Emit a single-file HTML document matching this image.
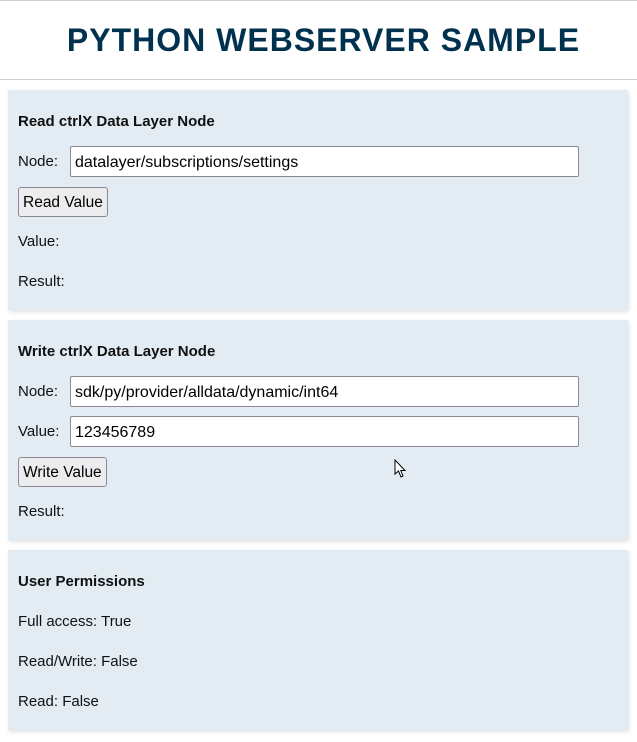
<!DOCTYPE html>
<html><head><style>
body{margin:0;width:637px;height:742px;background:#fff;position:relative;font-family:"Liberation Sans",sans-serif;overflow:hidden}
.t{position:absolute;left:0;top:0;width:637px;height:1px;background:#d0d0d0}
.h{position:absolute;left:0;top:79px;width:637px;height:1px;background:#d0d0d0}
h1{position:absolute;top:22px;left:0;width:647px;margin:0;text-align:center;font-size:32px;font-weight:bold;color:#00314f;letter-spacing:1px}
.c{position:absolute;left:8px;width:620px;background:#e3ecf2;box-shadow:1px 2px 4px rgba(0,0,0,0.12)}
.a{position:absolute;font-size:15px;color:#111;line-height:18px;white-space:nowrap}
.b{font-weight:bold}
.i{position:absolute;left:62px;height:29px;background:#fff;border:1px solid #8a8a92;border-radius:2px;font-size:16px;line-height:31px;padding-left:4px;box-sizing:content-box;color:#000}
.btn{position:absolute;left:10px;height:28px;background:#ececef;border:1px solid #8a8a92;border-radius:3px;font-size:15.5px;line-height:30px;padding:0 4px;color:#000}
</style></head><body>
<div class="t"></div>
<h1>PYTHON WEBSERVER SAMPLE</h1>
<div class="h"></div>

<div class="c" style="top:90px;height:220px">
<div class="a b" style="left:10px;top:23px">Read ctrlX Data Layer Node</div>
<div class="a" style="left:10px;top:63px">Node:</div>
<div class="i" style="top:56px;width:503px">datalayer/subscriptions/settings</div>
<div class="btn" style="top:97px">Read Value</div>
<div class="a" style="left:10px;top:143px">Value:</div>
<div class="a" style="left:10px;top:183px">Result:</div>
</div>

<div class="c" style="top:320px;height:220px">
<div class="a b" style="left:10px;top:23px">Write ctrlX Data Layer Node</div>
<div class="a" style="left:10px;top:63px">Node:</div>
<div class="i" style="top:56px;width:503px">sdk/py/provider/alldata/dynamic/int64</div>
<div class="a" style="left:10px;top:103px">Value:</div>
<div class="i" style="top:96px;width:503px">123456789</div>
<div class="btn" style="top:137px">Write Value</div>
<div class="a" style="left:10px;top:183px">Result:</div>
<svg style="position:absolute;left:386px;top:139px" width="14" height="20" viewBox="0 0 14 20"><path d="M1 1 L1 15 L4.5 12 L7 18 L9 17 L6.8 11.5 L11 11.5 Z" fill="#fff" stroke="#000" stroke-width="1"/></svg>
</div>

<div class="c" style="top:550px;height:180px">
<div class="a b" style="left:10px;top:23px">User Permissions</div>
<div class="a" style="left:10px;top:63px">Full access: True</div>
<div class="a" style="left:10px;top:103px">Read/Write: False</div>
<div class="a" style="left:10px;top:143px">Read: False</div>
</div>
</body></html>
